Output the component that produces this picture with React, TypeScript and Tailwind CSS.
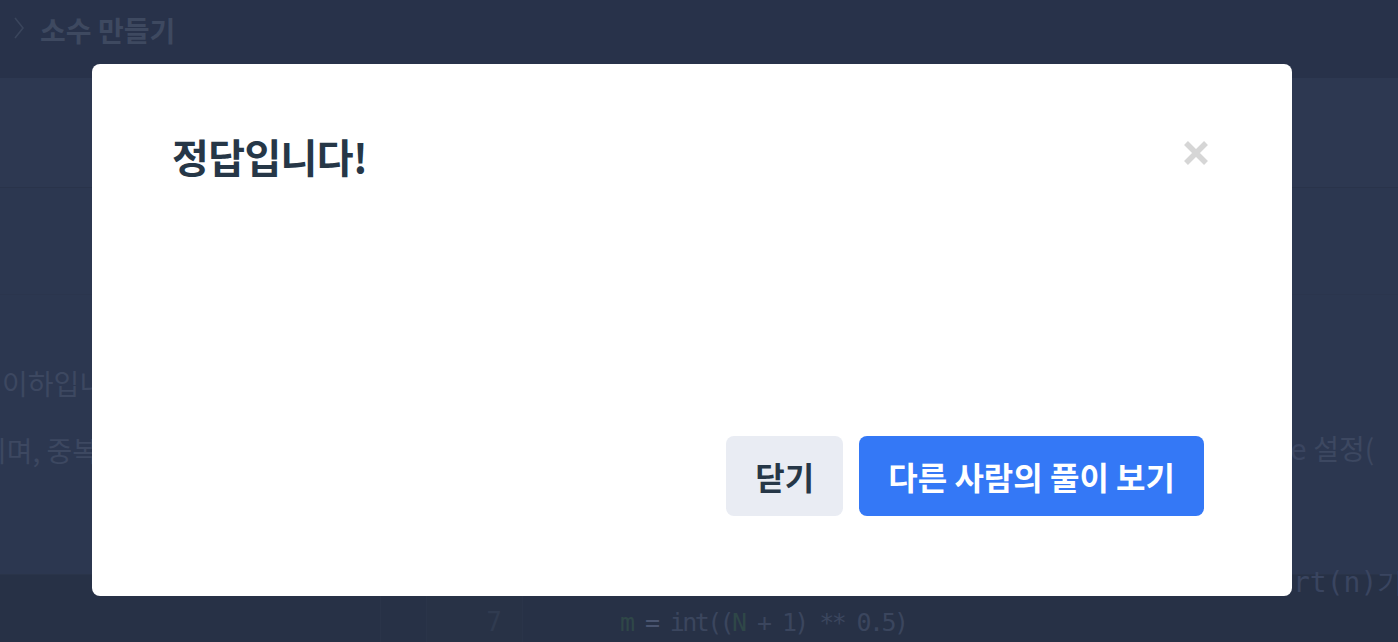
import React from 'react';

const font = "font-['Noto_Sans_CJK_KR','Noto_Sans',sans-serif]";
const mono = "font-['DejaVu_Sans_Mono','Liberation_Mono',monospace]";

export default function App() {
  return (
    <div className={`relative h-[642px] w-full overflow-hidden bg-[#2c3750] ${font}`}>
      {/* dimmed page behind the modal */}
      <div className="flex h-[78px] items-start gap-[14px] bg-[#28324a] pl-[12px] pt-[10px]">
        <svg width="14" height="36" viewBox="0 0 14 36" fill="none">
          <path d="M3 8l8 10-8 10" stroke="#3a455c" strokeWidth="1.6" />
        </svg>
        <span className="text-[28px] font-bold leading-[40px] text-[#3e4960]">소수 만들기</span>
      </div>
      <div className="h-[110px] border-b border-[#29334a] bg-[#2d3851]" />
      <div className="h-[107px] border-b border-[#2b354d]" />
      <div className="flex h-[279px] flex-col overflow-hidden pt-[54px]">
        <div className="flex h-[67px] items-center text-[28px] text-[#3d4861]">
          <span className="ml-[2px]">이하입니다.</span>
        </div>
        <div className="flex h-[67px] items-center text-[28px] text-[#3d4861]">
          <span className="-ml-[19px] grow">이며, 중복된 숫자가 들어있지 않습니다.</span>
          <span className="w-[108px] shrink-0 whitespace-nowrap">
            <span className={`${mono} text-[#3a4560]`}>e</span> 설정(
          </span>
        </div>
      </div>
      <div className="flex h-[96px] border-t border-[#2a3449] bg-[#273146]">
        <div className="w-[380px]" />
        <div className="w-[47px] border-x border-[#2a3449]" />
        <div className="flex w-[96px] items-center justify-end border-r border-[#2a3449] bg-[#283246] pr-[20px]">
          <span className={`${mono} text-[26px] text-[#303b50]`}>7</span>
        </div>
        <div className={`flex grow items-center whitespace-pre pl-[97px] ${mono} text-[25px] tracking-[-2.6px] text-[#3b465e]`}>
          <span className="text-[#2f4748]">m</span>
          <span className="text-[#4a5570]"> = </span>
          <span>int((</span>
          <span className="text-[#2f4748]">N</span>
          <span> + 1) ** 0.5)</span>
        </div>
        <span className={`${mono} -mt-[10px] w-[105px] shrink-0 self-start whitespace-nowrap text-[28px] leading-[36px] text-[#3a4560]`}>
          rt(n)가
        </span>
      </div>

      {/* modal */}
      <div className="absolute left-[92px] top-[64px] flex h-[532px] w-[1200px] flex-col rounded-[8px] bg-white pb-[80px] pl-[80px] pr-[83px] pt-[64px]">
        <div className="flex items-center justify-between">
          <h2 className="text-[40px] font-bold leading-[56px] tracking-[-0.6px] text-[#263747]">정답입니다!</h2>
          <button className="mb-[6px] flex h-[26px] w-[26px] items-center justify-center">
            <svg width="26" height="26" viewBox="0 0 26 26">
              <path d="M3 3l20 20M23 3L3 23" stroke="#d6d6d6" strokeWidth="5.5" />
            </svg>
          </button>
        </div>
        <div className="flex-1" />
        <div className="mr-[5px] flex justify-end gap-[16px]">
          <button className="h-[80px] rounded-[8px] bg-[#e9ecf3] px-[29px] text-[32px] font-bold text-[#263747]">
            닫기
          </button>
          <button className="h-[80px] rounded-[8px] bg-[#3478f6] px-[29px] text-[32px] font-bold text-white">
            다른 사람의 풀이 보기
          </button>
        </div>
      </div>
    </div>
  );
}
